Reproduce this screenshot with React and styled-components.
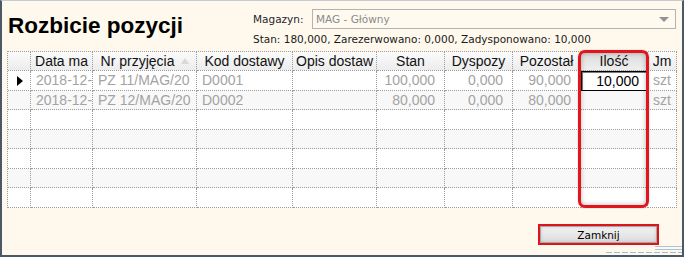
import React from "react";
import styled, { createGlobalStyle } from "styled-components";

const GlobalStyle = createGlobalStyle`
  html, body {
    margin: 0;
    padding: 0;
    background: #ffffff;
  }
`;

const COLS = "23px 62px 104px 96px 84px 68px 68px 68px 67px 29px";
const DOT = "1px dotted #9c9c9c";

const Window = styled.div`
  position: relative;
  width: 684px;
  height: 257px;
  box-sizing: border-box;
  background: #fff9ed;
  border: 2px solid #4b5866;
  border-top: 1px solid #c6ccd3;
  font-family: "DejaVu Sans", sans-serif;
  overflow: hidden;
`;

const Top = styled.div`
  display: flex;
  justify-content: space-between;
  height: 50px;
  padding: 0 6px;
`;

const Title = styled.h1`
  margin: 12px 0 0 0;
  font-family: "Liberation Sans", Arial, sans-serif;
  font-size: 22.5px;
  line-height: 26px;
  font-weight: bold;
  color: #000;
`;

const StockPanel = styled.div`
  width: 423px;
  display: flex;
  flex-direction: column;
  padding-top: 8px;
`;

const FieldRow = styled.div`
  display: flex;
  align-items: center;
`;

const Label = styled.span`
  width: 59px;
  font-size: 10.5px;
  color: #1f2430;
`;

const Combo = styled.div`
  flex: 1;
  position: relative;
  height: 20px;
  box-sizing: border-box;
  border: 1px solid #b3b3b3;
  background: #fffaf0;
  display: flex;
  align-items: center;
  padding-left: 3px;
  font-size: 10.5px;
  color: #8a8a8a;
`;

const ComboArrow = styled.span`
  position: absolute;
  right: 6px;
  top: 7px;
  width: 0;
  height: 0;
  border-left: 5px solid transparent;
  border-right: 5px solid transparent;
  border-top: 5px solid #929292;
`;

const Stats = styled.div`
  margin-top: 4px;
  font-size: 10.5px;
  line-height: 13px;
  color: #1a1a1a;
  white-space: nowrap;
`;

const GridWrap = styled.div`
  position: relative;
  margin-left: 5px;
  width: 670px;
  box-sizing: border-box;
  border-top: ${DOT};
  border-left: ${DOT};
  font-family: "Liberation Sans", Arial, sans-serif;
  font-size: 14px;
`;

const Row = styled.div`
  display: grid;
  grid-template-columns: ${COLS};
  height: ${({ $h }) => $h}px;
  background: ${({ $shade }) => ($shade ? "#f8f8f8" : "#ffffff")};
`;

const HeadCell = styled.div`
  box-sizing: border-box;
  border-right: ${DOT};
  border-bottom: ${DOT};
  background: ${({ $active }) =>
    $active
      ? "linear-gradient(#dcdcdc, #eeeeee)"
      : "linear-gradient(#fbfbfb, #ececec)"};
  color: #111;
  text-align: center;
  padding: ${({ $sort }) => ($sort ? "0 17px 0 3px" : "0 3px")};
  line-height: 18px;
  white-space: nowrap;
  overflow: hidden;
  position: relative;
`;

const SortMark = styled.span`
  position: absolute;
  right: 7px;
  top: 6px;
  width: 0;
  height: 0;
  border-left: 4px solid transparent;
  border-right: 4px solid transparent;
  border-bottom: 6px solid #d8d8d8;
`;

const Cell = styled.div`
  box-sizing: border-box;
  border-right: ${DOT};
  border-bottom: ${DOT};
  color: #a3a3a3;
  padding: ${({ $num }) => ($num ? "0 9px 0 0" : "0 0 0 5px")};
  line-height: 19px;
  white-space: nowrap;
  overflow: hidden;
  display: flex;
  align-items: center;
  justify-content: ${({ $num }) => ($num ? "flex-end" : "flex-start")};
`;

const IndicatorCell = styled(Cell)`
  justify-content: center;
  padding: 0;
`;

const Pointer = styled.span`
  width: 0;
  height: 0;
  border-top: 5px solid transparent;
  border-bottom: 5px solid transparent;
  border-left: 6px solid #000;
  margin-left: 2px;
`;

const EditCell = styled(Cell)`
  border: 1px solid #000;
  box-shadow: inset 1px 1px 0 #7a7a7a;
  color: #000;
  background: #fff;
  padding-right: 8px;
`;

const Highlight = styled.div`
  position: absolute;
  left: 570px;
  top: -2px;
  width: 71px;
  height: 158px;
  box-sizing: border-box;
  border: 3px solid #e4141d;
  border-radius: 7px;
  box-shadow: inset 0 0 5px rgba(0, 0, 0, 0.28), 0 0 2px rgba(0, 0, 0, 0.2);
  pointer-events: none;
`;

const Footer = styled.div`
  display: flex;
  justify-content: flex-end;
  padding-right: 23px;
  margin-top: 16px;
`;

const CloseButton = styled.button`
  width: 121px;
  height: 21px;
  box-sizing: border-box;
  border: 2px solid #dc141d;
  background: linear-gradient(#f3f3f3, #dcdcdc);
  box-shadow: inset 0 0 0 1px #a8a8a8, inset 0 0 4px rgba(0, 0, 0, 0.2);
  font-family: "DejaVu Sans", sans-serif;
  font-size: 10.5px;
  color: #000;
  padding: 0;
`;

const Grip = styled.div`
  position: absolute;
  right: 0;
  bottom: 0;
  width: 76px;
  height: 9px;
  display: flex;
  flex-direction: column;
  align-items: flex-end;
  gap: 2px;
`;

const GripLine = styled.div`
  height: 1px;
  width: ${({ $w }) => $w}px;
  background: ${({ $dash }) =>
    $dash
      ? "repeating-linear-gradient(90deg, #9fbbd8 0 6px, transparent 6px 8px)"
      : "#a9c3dd"};
`;

const columns = [
  { title: "" },
  { title: "Data ma" },
  { title: "Nr przyjęcia", sort: true },
  { title: "Kod dostawy" },
  { title: "Opis dostaw" },
  { title: "Stan" },
  { title: "Dyspozy" },
  { title: "Pozostał" },
  { title: "Ilość", active: true },
  { title: "Jm" },
];

const rows = [
  ["2018-12-", "PZ 11/MAG/20", "D0001", "", "100,000", "0,000", "90,000", "10,000", "szt"],
  ["2018-12-", "PZ 12/MAG/20", "D0002", "", "80,000", "0,000", "80,000", "", "szt"],
  ["", "", "", "", "", "", "", "", ""],
  ["", "", "", "", "", "", "", "", ""],
  ["", "", "", "", "", "", "", "", ""],
  ["", "", "", "", "", "", "", "", ""],
  ["", "", "", "", "", "", "", "", ""],
];

const numeric = [false, false, false, false, true, true, true, true, false];

const App = () => {
  return (
    <Window>
      <GlobalStyle />
      <Top>
        <Title>Rozbicie pozycji</Title>
        <StockPanel>
          <FieldRow>
            <Label>Magazyn:</Label>
            <Combo>
              MAG - Główny
              <ComboArrow />
            </Combo>
          </FieldRow>
          <Stats>Stan: 180,000, Zarezerwowano: 0,000, Zadysponowano: 10,000</Stats>
        </StockPanel>
      </Top>

      <GridWrap>
        <Row $h={19}>
          {columns.map((c, i) => (
            <HeadCell key={i} $active={c.active} $sort={c.sort}>
              {c.title}
              {c.sort && <SortMark />}
            </HeadCell>
          ))}
        </Row>
        {rows.map((r, ri) => (
          <Row key={ri} $h={ri % 2 === 0 ? 20 : 19} $shade={ri % 2 === 1}>
            <IndicatorCell>{ri === 0 && <Pointer />}</IndicatorCell>
            {r.map((v, ci) =>
              ri === 0 && ci === 7 ? (
                <EditCell key={ci} $num>
                  {v}
                </EditCell>
              ) : (
                <Cell key={ci} $num={numeric[ci]}>
                  {v}
                </Cell>
              )
            )}
          </Row>
        ))}
        <Highlight />
      </GridWrap>

      <Footer>
        <CloseButton>Zamknij</CloseButton>
      </Footer>

      <Grip>
        <GripLine $w={27} />
        <GripLine $w={27} />
        <GripLine $w={76} $dash />
      </Grip>
    </Window>
  );
};

export default App;
